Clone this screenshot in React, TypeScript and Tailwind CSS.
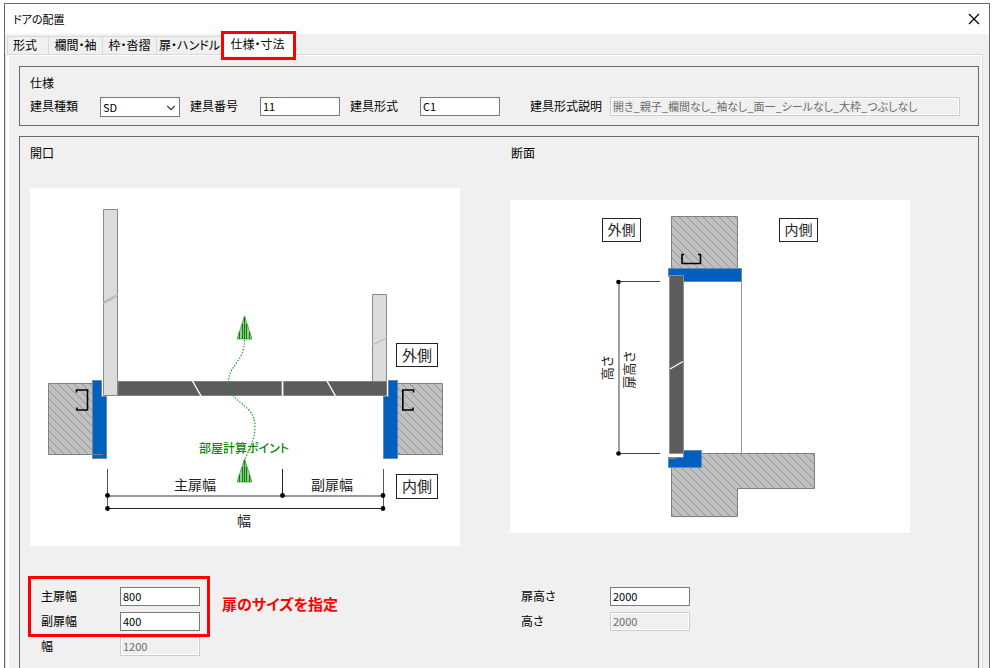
import type { ReactNode } from "react";
import { ChevronDown } from "lucide-react";

const tabs = [
  { label: "形式", width: "w-[41px] pl-[5px] text-left" },
  { label: "欄間・袖", width: "w-[54px]" },
  { label: "枠・沓摺", width: "w-[54px]" },
  { label: "扉・ハンドル", width: "w-[66px]" },
];

const enabledInput = "border-[#7a7a7a] bg-white text-black";
const disabledInput = "border-[#cccccc] bg-[#f0f0f0] text-[#6d6d6d] shadow-[inset_0_0_0_1px_#ffffff]";

type FieldProps = {
  id: string;
  label: string;
  value: string;
  labelClass?: string;
  inputClass?: string;
  disabled?: boolean;
};

const Field = ({ id, label, value, labelClass = "", inputClass = "w-20", disabled }: FieldProps) => (
  <>
    <label htmlFor={id} className={`shrink-0 pt-px whitespace-nowrap ${labelClass}`}>
      {label}
    </label>
    <input
      id={id}
      type="text"
      defaultValue={value}
      disabled={disabled}
      className={`h-[19px] min-w-0 border px-0.5 pb-px text-[11px] leading-4 outline-none ${inputClass} ${
        disabled ? disabledInput : enabledInput
      }`}
    />
  </>
);

const Hatch = ({ id }: { id: string }) => (
  <defs>
    <pattern id={id} width="8" height="8" patternUnits="userSpaceOnUse">
      <rect width="8" height="8" fill="#c0c0c0" />
      <path d="M-1 -1 L9 9 M-1 7 L1 9 M7 -1 L9 1" stroke="#858585" strokeWidth="0.8" />
    </pattern>
  </defs>
);

type BoxedTextProps = { x: number; y: number; w: number; h: number; size: number; children: ReactNode };

const BoxedText = ({ x, y, w, h, size, children }: BoxedTextProps) => (
  <g>
    <rect x={x} y={y} width={w} height={h} fill="#fff" stroke="#222" />
    <text x={x + w / 2} y={y + h / 2 + size * 0.37} fontSize={size} textAnchor="middle" fill="#222">
      {children}
    </text>
  </g>
);

const Arrow = ({ y }: { y: number }) => (
  <g>
    <path d={`M214.5 ${y} L222 ${y + 23} H207 Z`} fill="#a5d3a5" stroke="#3f9f3f" strokeWidth="0.8" />
    <path
      d={`M209.5 ${y + 16} V${y + 23} M212.5 ${y + 8} V${y + 23} M214.5 ${y + 1} V${y + 23} M216.5 ${y + 8} V${y + 23} M219.5 ${y + 16} V${y + 23}`}
      stroke="#0a7d0a"
      strokeWidth="1.2"
    />
  </g>
);

const OpeningDrawing = () => (
  <svg width="430" height="358" viewBox="0 0 430 358" className="bg-white" role="img" aria-label="開口">
    <Hatch id="hatch-opening" />
    {/* walls */}
    <path d="M18.5 195.5 H63 V266.5 H18.5 Z M367.5 195.5 H412.5 V266.5 H367.5 Z" fill="url(#hatch-opening)" stroke="#808080" />
    <path d="M46.5 204.5 V202 H57.5 V222 H47 V219.5" fill="none" stroke="#000" strokeWidth="1.6" />
    <path d="M383.5 204.5 V202 H372.8 V222 H383 V219.5" fill="none" stroke="#000" strokeWidth="1.6" />
    {/* frames */}
    <path d="M62.5 192.5 H71.5 V208.5 H76.5 V270.5 H62.5 Z" fill="#0060c0" stroke="#6688aa" />
    <path d="M358.5 192.5 H367.5 V270.5 H353.5 V208.5 H358.5 Z" fill="#0060c0" stroke="#6688aa" />
    <path d="M62 266.5 H73" stroke="#808080" />
    {/* open leaves */}
    <path d="M73.5 21.5 H87.5 V207.5 H73.5 Z M342.5 106.5 H356.5 V193.5 H342.5 Z" fill="#dbdbdb" stroke="#8a8a8a" />
    <path d="M73 115 L88 107 M342 156.5 L357 149" stroke="#eee" strokeWidth="1.2" />
    <path d="M73 114.3 L88 106.3 M73 115.7 L88 107.7 M342 157 L357 149.5" stroke="#999" strokeWidth="0.8" />
    {/* closed leaves */}
    <path d="M88 193.5 H252 V207.5 H88 Z M253.5 193.5 H356.5 V207.5 H253.5 Z" fill="#5c5c5c" stroke="#808080" />
    <path d="M252.5 193 V208 M162.5 193 L171 208 M297 193 L305.5 208" stroke="#fff" strokeWidth="1.4" />
    {/* room calculation point */}
    <path
      d="M214.5 152 C214.5 174 198.5 177 198.5 194 C198.5 216 225 215 225 238 C225 252 219 262 214.5 272"
      fill="none"
      stroke="#1f9a1f"
      strokeWidth="1.2"
      strokeDasharray="1.5 1.5"
    />
    <Arrow y={128} />
    <Arrow y={271} />
    <text x="214" y="265" fontSize="12" fontWeight="500" textAnchor="middle" fill="#0b8a0b">
      部屋計算ポイント
    </text>
    {/* dimensions */}
    <path d="M77.5 281 V321 M353.5 281 V321" stroke="#555" />
    <path d="M252.5 281 V308 M77 320.5 H353" stroke="#222" />
    <path d="M77 308 H353" stroke="#777" strokeWidth="1.6" />
    <g fill="#000">
      <circle cx="77.5" cy="307.5" r="2.4" />
      <circle cx="77.5" cy="320.5" r="2.4" />
      <circle cx="252.5" cy="307.5" r="2.4" />
      <circle cx="353" cy="307.5" r="2.4" />
      <circle cx="353" cy="320.5" r="2.4" />
    </g>
    <g fontSize="14" textAnchor="middle" fill="#222">
      <text x="165" y="302">主扉幅</text>
      <text x="302" y="302">副扉幅</text>
      <text x="214" y="338">幅</text>
    </g>
    <BoxedText x={366.5} y={155.5} w={41} h={23} size={15}>外側</BoxedText>
    <BoxedText x={366.5} y={286.5} w={41} h={24} size={15}>内側</BoxedText>
  </svg>
);

const SectionDrawing = () => (
  <svg width="400" height="333" viewBox="0 0 400 333" className="bg-white" role="img" aria-label="断面">
    <Hatch id="hatch-section" />
    {/* walls and slab */}
    <path d="M161.5 16.5 H227.5 V69 H161.5 Z" fill="url(#hatch-section)" stroke="#808080" />
    <path
      d="M191 253.5 H304.5 V288.5 H227.5 V316.5 H161.5 V267 H191 Z"
      fill="url(#hatch-section)"
      stroke="#808080"
    />
    <path d="M174 54.5 H172 V63.5 H190.5 V54.5 H188" fill="none" stroke="#000" strokeWidth="1.6" />
    <path d="M231.5 81 V253" stroke="#999" />
    {/* frames */}
    <path d="M158.5 68.5 H231.5 V81.5 H173.5 V76.5 H158.5 Z" fill="#0060c0" stroke="#6688aa" />
    <path d="M158.5 257.5 H173.5 V250.5 H191.5 V267.5 H158.5 Z" fill="#0060c0" stroke="#6688aa" />
    <path d="M158 258.5 H166" stroke="#808080" />
    {/* leaf */}
    <path d="M159.5 75.5 H173.5 V253.5 H159.5 Z" fill="#5c5c5c" stroke="#909090" />
    <path d="M160 169 L173 161.5" stroke="#fff" strokeWidth="1.3" />
    {/* dimensions */}
    <path d="M108 81.5 H150 M108 253.5 H150" stroke="#444" />
    <path d="M109 82 V253" stroke="#777" strokeWidth="1.4" />
    <circle cx="108.5" cy="82" r="2.3" />
    <circle cx="108.5" cy="253.5" r="2.3" />
    <g fontSize="13" textAnchor="middle" fill="#222">
      <text transform="translate(102 168) rotate(-90)">高さ</text>
      <text transform="translate(124 170) rotate(-90)">扉高さ</text>
    </g>
    <BoxedText x={92.5} y={18.5} w={38} h={23} size={14}>外側</BoxedText>
    <BoxedText x={269.5} y={18.5} w={38} h={23} size={14}>内側</BoxedText>
  </svg>
);

const App = () => {
  return (
    <div className="flex min-h-screen flex-col bg-white pt-[3px] pr-1 pl-1 font-['Noto_Sans_CJK_JP',sans-serif] text-xs leading-4 text-black [font-feature-settings:'palt']">
      <div className="flex flex-1 flex-col border border-b-0 border-[#696969] bg-[#f0f0f0]">
        <header className="flex h-[30px] items-center justify-between bg-white pr-[7px] pl-2">
          <h1 className="text-[11px] font-normal">ドアの配置</h1>
          <button type="button" aria-label="閉じる" className="flex size-4 items-center justify-center">
            <svg width="12" height="12" viewBox="0 0 12 12">
              <path d="M1 1 L11 11 M11 1 L1 11" stroke="#000" strokeWidth="1.2" />
            </svg>
          </button>
        </header>

        <nav role="tablist" className="flex h-5 items-end pl-0.5">
          {tabs.map((tab) => (
            <button
              key={tab.label}
              type="button"
              role="tab"
              aria-selected={false}
              className={`h-[18px] border-t border-l border-[#d9d9d9] pb-px whitespace-nowrap ${tab.width}`}
            >
              {tab.label}
            </button>
          ))}
          <div className="relative z-10 -mb-0.5 w-[71px]">
            <button
              type="button"
              role="tab"
              aria-selected={true}
              className="h-[22px] w-full bg-white pb-0.5 whitespace-nowrap"
            >
              仕様・寸法
            </button>
            <div className="pointer-events-none absolute -top-[3px] -right-[3px] -bottom-1 -left-px border-3 border-[#ff0000]" />
          </div>
        </nav>

        <div className="mr-1.5 flex flex-1 flex-col border-t border-r border-l border-[#d9d9d9]">
          <main className="flex flex-1 flex-col gap-2.5 border-t border-r border-l-3 border-white pt-2.5 pr-0.5 pl-2.5">
            <section className="border border-[#696969] px-2.5 pt-2 pb-2">
              <h2 className="mb-1.5 font-normal">仕様</h2>
              <div className="flex h-5 items-start pr-2">
                <label htmlFor="kind" className="w-[70px] shrink-0 pt-px">
                  建具種類
                </label>
                <div className="relative mr-2.5 w-20">
                  <select
                    id="kind"
                    defaultValue="SD"
                    className="block h-5 w-full appearance-none border border-[#7a7a7a] bg-white pb-px pl-0.5 text-[11px] outline-none"
                  >
                    <option>SD</option>
                  </select>
                  <ChevronDown className="pointer-events-none absolute top-1 right-0.5 size-3.5 text-[#444]" strokeWidth={2} />
                </div>
                <Field id="number" label="建具番号" value="11" labelClass="w-[70px]" inputClass="mr-2.5 w-20" />
                <Field id="form" label="建具形式" value="C1" labelClass="w-[70px]" inputClass="mr-[30px] w-20" />
                <Field
                  id="description"
                  label="建具形式説明"
                  value="開き_親子_欄間なし_袖なし_面一_シールなし_大枠_つぶしなし"
                  labelClass="w-20"
                  inputClass="flex-1"
                  disabled
                />
              </div>
            </section>

            <section className="grid flex-1 grid-cols-[480px_1fr] content-start border border-b-0 border-[#696969] pt-2 pl-2.5">
              <h2 className="font-normal">開口</h2>
              <h2 className="pl-px font-normal">断面</h2>

              <div className="pt-[27px]">
                <OpeningDrawing />
              </div>
              <div className="pt-[39px]">
                <SectionDrawing />
              </div>

              <div className="flex items-start pt-[41px] pl-[11px]">
                <div className="relative grid grid-cols-[79px_80px] gap-y-1.5">
                  <Field id="main-width" label="主扉幅" value="800" />
                  <Field id="sub-width" label="副扉幅" value="400" />
                  <Field id="total-width" label="幅" value="1200" disabled />
                  <div className="pointer-events-none absolute -top-[11px] -right-2.5 bottom-[19px] -left-[13px] border-3 border-[#ff0000]" />
                </div>
                <p className="mt-[7px] ml-[22px] text-[15px] leading-5 font-bold text-[#ff0000]">扉のサイズを指定</p>
              </div>
              <div className="pt-[41px] pl-[11px]">
                <div className="grid grid-cols-[89px_80px] gap-y-1.5">
                  <Field id="leaf-height" label="扉高さ" value="2000" />
                  <Field id="height" label="高さ" value="2000" disabled />
                </div>
              </div>
            </section>
          </main>
        </div>
      </div>
    </div>
  );
};

export default App;
